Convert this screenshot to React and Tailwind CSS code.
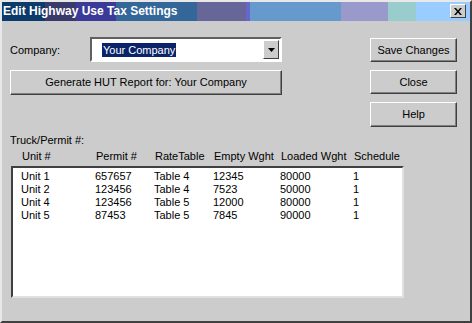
const rows = [
  ['Unit 1', '657657', 'Table 4', '12345', '80000', '1'],
  ['Unit 2', '123456', 'Table 4', '7523', '50000', '1'],
  ['Unit 4', '123456', 'Table 5', '12000', '80000', '1'],
  ['Unit 5', '87453', 'Table 5', '7845', '90000', '1'],
];

const cols = ['w-[74px]', 'w-[59px]', 'w-[59px]', 'w-[67px]', 'w-[73px]', 'w-[48px]'];
const headers = ['Unit #', 'Permit #', 'RateTable', 'Empty Wght', 'Loaded Wght', 'Schedule'];

function Btn({ children, className = '' }) {
  return (
    <button
      className={`flex items-center justify-center bg-[#cccccc] border border-t-white border-l-white border-r-[#404040] border-b-[#404040] shadow-[inset_-1px_-1px_#808080] text-black ${className}`}
    >
      {children}
    </button>
  );
}

export default function App() {
  return (
    <div className="w-[472px] h-[323px] bg-[#cccccc] border-l-2 border-t-2 border-l-[#e8e8e8] border-t-[#e8e8e8] border-r-2 border-b-2 border-r-[#404040] border-b-[#404040] text-[11px] text-black font-['Liberation_Sans',Arial,sans-serif] flex flex-col overflow-hidden">
      <div className="h-[19px] flex relative shrink-0">
        <div className="w-[43px] bg-[#0c3a6a]" />
        <div className="w-[31px] bg-[#3a3a6a]" />
        <div className="w-[40px] bg-[#3a3a99]" />
        <div className="w-[81px] bg-[#336699]" />
        <div className="w-[49px] bg-[#666699]" />
        <div className="w-[4px] bg-[#6666cc]" />
        <div className="w-[91px] bg-[#6699cc]" />
        <div className="w-[47px] bg-[#9999cc]" />
        <div className="w-[28px] bg-[#99cccc]" />
        <div className="flex-1 bg-[#99ccff]" />
        <span className="absolute left-[1px] top-[2px] text-white font-bold text-[12px] leading-[14px]">
          Edit Highway Use Tax Settings
        </span>
        <div className="absolute right-[4px] top-[2px] w-[16px] h-[14px] bg-[#cccccc] border border-t-white border-l-white border-r-[#404040] border-b-[#404040] flex items-center justify-center">
          <svg width="8" height="7" viewBox="0 0 8 7">
            <path d="M0 0h2l2 2.5L6 0h2L5 3.5 8 7H6L4 4.5 2 7H0l3-3.5z" fill="black" />
          </svg>
        </div>
      </div>

      <div className="flex px-[8px] pt-[16px]">
        <div className="w-[272px] flex flex-col">
          <div className="flex items-center h-[25px]">
            <span className="w-[80px] pt-[2px]">Company:</span>
            <div className="w-[192px] h-[25px] bg-white border-2 border-t-[#606060] border-l-[#606060] border-r-white border-b-white flex items-center pl-[10px] relative">
              <span className="bg-[#0a246a] text-white px-[1px] leading-[14px]">Your Company</span>
              <div className="absolute right-[1px] top-[1px] bottom-[1px] w-[16px] bg-[#cccccc] border border-t-white border-l-white border-r-[#404040] border-b-[#404040] flex items-center justify-center">
                <svg width="7" height="4" viewBox="0 0 7 4">
                  <path d="M0 0h7L3.5 4z" fill="black" />
                </svg>
              </div>
            </div>
          </div>
          <Btn className="mt-[8px] h-[25px] w-[272px]">Generate HUT Report for: Your Company</Btn>
        </div>
        <div className="ml-auto mr-[5px] flex flex-col gap-[8px] mt-[1px]">
          <Btn className="w-[87px] h-[24px]">Save Changes</Btn>
          <Btn className="w-[87px] h-[24px]">Close</Btn>
          <Btn className="w-[87px] h-[25px]">Help</Btn>
        </div>
      </div>

      <div className="px-[8px] mt-[7px]">
        <div className="leading-[13px]">Truck/Permit #:</div>
        <div className="flex pl-[12px] mt-[3px] leading-[13px]">
          {headers.map((h, i) => (
            <div key={h} className={cols[i]}>{h}</div>
          ))}
        </div>
        <div className="mt-[3px] ml-[1px] w-[393px] h-[132px] bg-white border-2 border-t-[#404040] border-l-[#404040] border-r-[#e0e0e0] border-b-[#e0e0e0] pt-[2px] pl-[8px]">
          {rows.map((r) => (
            <div key={r[0]} className="flex leading-[13px]">
              {r.map((c, i) => (
                <div key={i} className={cols[i]}>{c}</div>
              ))}
            </div>
          ))}
        </div>
      </div>
    </div>
  );
}
